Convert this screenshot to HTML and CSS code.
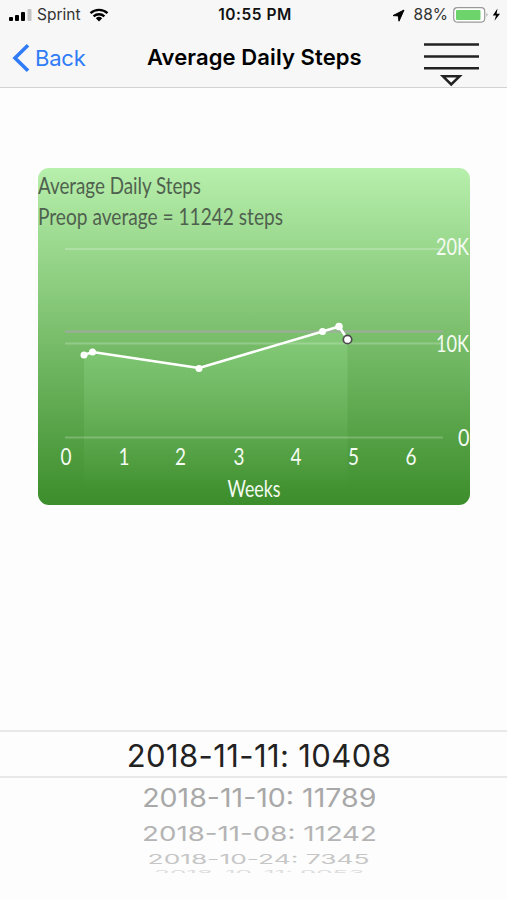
FILE: index.html
```html
<!doctype html>
<html lang="en">
    <head>
        <meta charset="utf-8">
        <title>Average Daily Steps</title>
        <link rel="stylesheet" href="styles.css">
    </head>
    <body>
        <div class="header">
            <div class="status">
                <div class="carrier">
                    <svg width="23" height="12" viewBox="0 0 23 12">
                        <rect x="0" y="8" width="4" height="4" rx="1"/>
                        <rect x="6" y="6" width="4" height="6" rx="1"/>
                        <rect x="12" y="3" width="4" height="9" rx="1"/>
                        <rect x="18.5" y="0" width="4" height="12" rx="1" fill="#c4c4c4"/>
                    </svg>
                    <span>Sprint</span>
                    <svg class="wifi" width="20" height="14" viewBox="0 0 20 14">
                        <path d="M1.5 5.2A12.4 12.4 0 0 1 18.5 5.2M4.6 8.4A8 8 0 0 1 15.4 8.4" fill="none" stroke="#000" stroke-width="2.4"/>
                        <path d="M6.8 10.3A4.8 4.8 0 0 1 13.2 10.3L10 13.6Z"/>
                    </svg>
                </div>
                <div class="time">10:55 PM</div>
                <div class="power">
                    <svg width="13" height="13" viewBox="0 0 13 13">
                        <path d="M12 1L1 6.6L6.3 6.9L7 12.2Z" stroke="#000" stroke-width="1" stroke-linejoin="round"/>
                    </svg>
                    <span>88%</span>
                    <svg class="battery" width="48" height="16" viewBox="0 0 48 16">
                        <rect x=".7" y=".7" width="31" height="14.4" rx="3.5" fill="#fff" stroke="#999" stroke-width="1.2"/>
                        <rect x="3" y="3" width="24.5" height="10" rx="1" fill="#6dd46b"/>
                        <path d="M33.5 5.8Q35.5 7.8 33.5 9.8Z" fill="#999"/>
                        <path d="M44.5 1.5L39.8 8.5H43L41.5 13.8L47 6.8H43.6Z"/>
                    </svg>
                </div>
            </div>
            <div class="nav">
                <div class="back">
                    <svg width="18" height="30" viewBox="0 0 18 30">
                        <path d="M16 2.2L3 15L16 27.8" fill="none" stroke="#2f7cf6" stroke-width="3.6"/>
                    </svg>
                    <span>Back</span>
                </div>
                <div class="title">Average Daily Steps</div>
                <svg class="menu" width="56" height="45" viewBox="0 0 56 45">
                    <path d="M0 2.500H55M0 14.500H55M0 26.300H55" stroke="#222" stroke-width="2.600"/>
                    <path d="M19 34.300H35.500L27.200 42.500Z" fill="#fff" stroke="#222" stroke-width="2.600"/>
                </svg>
            </div>
        </div>

        <div class="chart">
            <svg width="432" height="337" viewBox="0 0 432 337">
                <defs>
                    <linearGradient id="area" x1="0" y1="0" x2="0" y2="1">
                        <stop offset="0" stop-color="#98e090" stop-opacity=".36"/>
                        <stop offset="1" stop-color="#98e090" stop-opacity="0"/>
                    </linearGradient>
                </defs>
                <path d="M46 187L54.5 184L161 200L284.5 163.5L301 158.5L309.5 171V320H46Z" fill="url(#area)"/>
                <path class="grid" d="M27 81H405M27 175.5H405M27 269.5H405"/>
                <path class="preop" d="M27 163.5H405"/>
                <path class="line" d="M46 187L54.5 184L161 200L284.5 163.5L301 158.5L309.5 171"/>
                <g fill="#fff">
                    <circle cx="46" cy="187" r="3.5"/>
                    <circle cx="54.5" cy="184" r="3.5"/>
                    <circle cx="161" cy="200.5" r="3.5"/>
                    <circle cx="284.5" cy="163.5" r="3.5"/>
                    <circle cx="301" cy="158.5" r="3.8"/>
                    <circle cx="309.5" cy="171.5" r="4.2" stroke="#4c4c4c" stroke-width="1.7"/>
                </g>
                <g class="caption">
                    <text x="0" y="26" textLength="163" lengthAdjust="spacingAndGlyphs">Average Daily Steps</text>
                    <text x="0" y="57" textLength="245" lengthAdjust="spacingAndGlyphs">Preop average = 11242 steps</text>
                </g>
                <g class="yaxis">
                    <text x="398" y="87" textLength="33" lengthAdjust="spacingAndGlyphs">20K</text>
                    <text x="398" y="183.5" textLength="33" lengthAdjust="spacingAndGlyphs">10K</text>
                    <text x="420" y="277.5" textLength="11.5" lengthAdjust="spacingAndGlyphs">0</text>
                </g>
                <g class="xaxis">
                    <text x="22.5" y="296.5" textLength="11" lengthAdjust="spacingAndGlyphs">0</text>
                    <text x="80.5" y="296.5" textLength="11" lengthAdjust="spacingAndGlyphs">1</text>
                    <text x="137" y="296.5" textLength="11" lengthAdjust="spacingAndGlyphs">2</text>
                    <text x="195.5" y="296.5" textLength="11" lengthAdjust="spacingAndGlyphs">3</text>
                    <text x="252.5" y="296.5" textLength="11" lengthAdjust="spacingAndGlyphs">4</text>
                    <text x="310" y="296.5" textLength="11" lengthAdjust="spacingAndGlyphs">5</text>
                    <text x="367.5" y="296.5" textLength="11" lengthAdjust="spacingAndGlyphs">6</text>
                    <text x="189.5" y="329" textLength="53" lengthAdjust="spacingAndGlyphs">Weeks</text>
                </g>
            </svg>
        </div>

        <div class="picker">
            <div class="row selected"><span>2018-11-11: 10408</span></div>
            <div class="row second"><span>2018-11-10: 11789</span></div>
            <div class="row third"><span>2018-11-08: 11242</span></div>
            <div class="row fourth"><span>2018-10-24: 7345</span></div>
            <div class="row fifth"><span>2018-10-11: 9053</span></div>
        </div>
    </body>
</html>
```
FILE: styles.css
```css
body {
    margin: 0;
    width: 507px;
    height: 900px;
    overflow: hidden;
    background-color: #fdfdfd;
    font-family: Inter, "Liberation Sans", sans-serif;
    color: #000;
}
svg {
    display: block;
    flex: none;
}
.header {
    height: 87px;
    background-color: #f7f7f7;
    border-bottom: 1px solid #d2d2d2;
}
.status {
    height: 30px;
    display: grid;
    grid-template-columns: 1fr auto 1fr;
    align-items: center;
    font-size: 15.5px;
    line-height: 30px;
    padding: 0 6px 0 9px;
}
.carrier, .power {
    display: flex;
    align-items: center;
    color: #333;
}
.carrier > span {
    margin: 0 8px 0 5px;
}
.time {
    font-weight: 600;
    font-size: 15.5px;
    letter-spacing: 0.5px;
    color: #111;
}
.power {
    justify-content: flex-end;
}
.power > span {
    margin: 0 5px 0 9px;
}
.nav {
    height: 57px;
    display: grid;
    grid-template-columns: 135px 1fr 83px;
    align-items: start;
    padding-left: 12px;
}
.back {
    display: flex;
    align-items: center;
    height: 55px;
    font-size: 22px;
    letter-spacing: -0.2px;
    color: #2f7cf6;
}
.back > span {
    margin-left: 5px;
}
.title {
    line-height: 55px;
    font-size: 22px;
    font-weight: 600;
    letter-spacing: 0.1px;
    white-space: nowrap;
}
.menu {
    margin-top: 12px;
}
.chart {
    width: 432px;
    height: 337px;
    margin: 80px 0 0 38px;
    border-radius: 11px;
    overflow: hidden;
    background: linear-gradient(#b7efac, #3c8d2b);
}
.chart text {
    font-family: Lato, "Open Sans", sans-serif;
    font-size: 22.5px;
}
.grid {
    stroke: #fff;
    stroke-opacity: 0.22;
    stroke-width: 2;
}
.preop {
    stroke: #a6a6a6;
    stroke-opacity: 0.65;
    stroke-width: 2.4;
}
.line {
    fill: none;
    stroke: #fff;
    stroke-width: 2.6;
    stroke-linejoin: round;
}
.caption {
    fill: #4f614e;
}
.yaxis, .xaxis {
    fill: #f4fbf2;
}
/* wheel picker, rows flatten towards the bottom */
.picker {
    margin-top: 225px;
    height: 143px;
    overflow: hidden;
}
.row {
    display: flex;
    justify-content: center;
    align-items: center;
    padding-left: 11px;
    white-space: nowrap;
    font-size: 31px;
}
.selected {
    height: 44px;
    border-top: 2px solid #e8e8e8;
    border-bottom: 2px solid #e8e8e8;
    color: #222;
}
.selected > span {
    padding-top: 2px;
    letter-spacing: 0.4px;
}
.second {
    height: 38px;
    color: #a8a8a8;
}
.second > span {
    transform: scale(0.92, 0.82);
}
.third {
    height: 34px;
    color: #b4b4b4;
}
.third > span {
    transform: scale(0.893, 0.65);
}
.fourth {
    height: 18px;
    color: #c6c6c6;
}
.fourth > span {
    transform: scale(0.85, 0.42);
}
.fifth {
    height: 11px;
    color: #dedede;
}
.fifth > span {
    transform: scale(0.84, 0.26);
}
```
